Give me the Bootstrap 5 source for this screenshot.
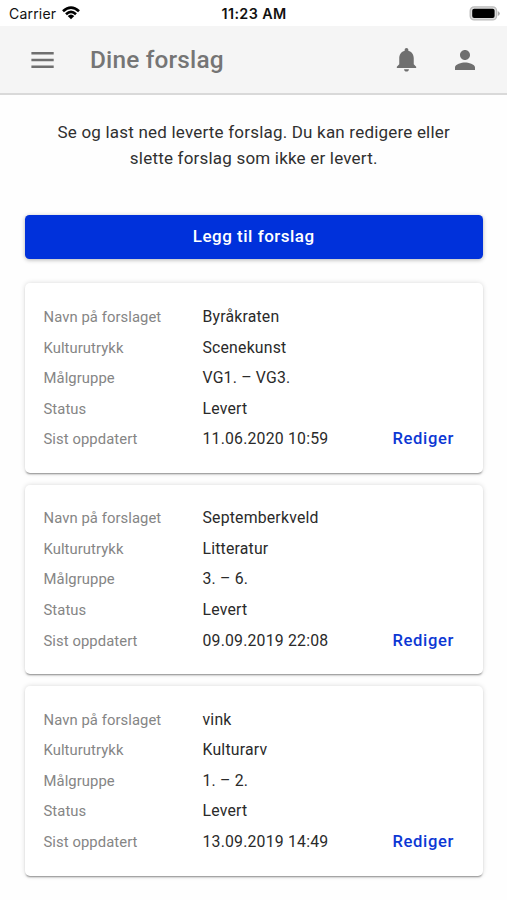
<!DOCTYPE html>
<html lang="no">
<head>
<meta charset="utf-8">
<meta name="viewport" content="width=device-width, initial-scale=1">
<title>Dine forslag</title>
<link href="https://cdn.jsdelivr.net/npm/bootstrap@5.3.0/dist/css/bootstrap.min.css" rel="stylesheet">
<style>
body{font-family:Roboto,"Liberation Sans",sans-serif;color:#303030;background:#fefefe;min-height:900px;overflow:hidden}
.status-bar{height:26px;padding:1px 7px 0 9px;font-family:Inter,"Liberation Sans",sans-serif;font-size:14px;color:#111;line-height:26px;background:#fff}
.status-bar .clock{font-weight:600;font-size:14.3px;letter-spacing:.4px;white-space:nowrap;margin-right:1px}
.carrier{letter-spacing:.2px}
.wifi{margin:-1px 0 0 5px}
.app-bar{height:69px;background:#f5f5f5;border-bottom:2px solid #d9d9d9;color:#6f6f6f;padding:0 27px 0 29px}
.app-title{font-size:24.4px;font-weight:500;letter-spacing:.18px;color:#757575;margin:0 0 0 33px;line-height:28px}
.profile-icon{margin-left:29px}
.page{padding:24px 24.5px 0 25px}
.intro{font-size:17px;line-height:26px;letter-spacing:.2px;margin:0 0 43.7px}
.btn-add{height:44px;padding:0;border:0;border-radius:4.5px;background:#0031db;color:#fff;font-size:17px;font-weight:500;letter-spacing:.5px;box-shadow:0 1px 4px rgba(0,0,0,.3);margin-bottom:24.5px}
.proposal{border:0;border-radius:5px;background:#fff;padding:18.8px 19px 18px 18.5px;margin-bottom:12.1px;box-shadow:0 2px 2px -1px rgba(0,0,0,.42),0 0 5px rgba(0,0,0,.15)}
.proposal .line{height:30.53px;line-height:30.53px;white-space:nowrap}
.proposal dt{width:159px;font-size:14.8px;font-weight:400;letter-spacing:.08px;color:#858585}
.proposal dd{margin:0;font-size:15.8px;letter-spacing:.2px;color:#2a2a2a}
.edit{color:#0c37d4;font-size:16.6px;font-weight:500;letter-spacing:.65px;text-decoration:none;margin-right:9.5px}
</style>
<script src="https://cdn.jsdelivr.net/npm/bootstrap@5.3.0/dist/js/bootstrap.bundle.min.js"></script>
</head>
<body>
<div class="status-bar d-flex align-items-center">
  <div class="col d-flex align-items-center"><span class="carrier">Carrier</span>
    <svg class="wifi" width="20" height="16" viewBox="0 0 20 16" fill="none" stroke="#000" stroke-width="2.7"><path d="M2 6.2Q10 -1 18 6.2M5 9.2Q10 4.7 15 9.2"/><path d="M6.7 11Q10 8 13.3 11L10 14.3Z" fill="#000" stroke="none"/></svg>
  </div>
  <span class="clock">11:23 AM</span>
  <div class="col d-flex justify-content-end">
    <svg width="31" height="15" viewBox="0 0 31 15"><rect x="1.2" y=".9" width="26.4" height="13" rx="4" fill="#ddd" stroke="#bbb" stroke-width="1.3"/><rect x="3.2" y="2.800" width="22.4" height="9.3" rx="2" fill="#000"/><path d="M28.800 5v5q2-1 2-2.500T28.800 5" fill="#aaa"/></svg>
  </div>
</div>
<header class="app-bar d-flex align-items-center">
  <svg width="28" height="28" viewBox="0 0 28 28" fill="none" stroke="currentColor" stroke-width="2.4"><path d="M2.400 7.300H24.700M2.400 14H24.700M2.400 20.700H24.700"/></svg>
  <h1 class="app-title">Dine forslag</h1>
  <svg class="ms-auto" width="29" height="29" viewBox="0 0 24 24" fill="currentColor"><path d="M12 22c1.100 0 2-.9 2-2h-4c0 1.100.89 2 2 2zm6-6v-5c0-3.070-1.640-5.640-4.500-6.320V4c0-.83-.67-1.500-1.500-1.500s-1.500.67-1.500 1.500v.68C7.630 5.360 6 7.920 6 11v5l-2 2v1h16v-1l-2-2z"/></svg>
  <svg class="profile-icon" width="30" height="30" viewBox="0 0 24 24" fill="currentColor"><path d="M12 12c2.210 0 4-1.790 4-4s-1.790-4-4-4-4 1.790-4 4 1.790 4 4 4zm0 2c-2.670 0-8 1.340-8 4v2h16v-2c0-2.660-5.330-4-8-4z"/></svg>
</header>
<main class="page">
  <p class="intro text-center">Se og last ned leverte forslag. Du kan redigere eller<br>slette forslag som ikke er levert.</p>
  <button type="button" class="btn btn-primary btn-add w-100">Legg til forslag</button>
  <dl class="card proposal">
    <div class="line d-flex"><dt>Navn på forslaget</dt><dd>Byråkraten</dd></div>
    <div class="line d-flex"><dt>Kulturutrykk</dt><dd>Scenekunst</dd></div>
    <div class="line d-flex"><dt>Målgruppe</dt><dd>VG1. – VG3.</dd></div>
    <div class="line d-flex"><dt>Status</dt><dd>Levert</dd></div>
    <div class="line d-flex"><dt>Sist oppdatert</dt><dd>11.06.2020 10:59</dd><dd class="ms-auto"><a class="edit" href="#">Rediger</a></dd></div>
  </dl>
  <dl class="card proposal">
    <div class="line d-flex"><dt>Navn på forslaget</dt><dd>Septemberkveld</dd></div>
    <div class="line d-flex"><dt>Kulturutrykk</dt><dd>Litteratur</dd></div>
    <div class="line d-flex"><dt>Målgruppe</dt><dd>3. – 6.</dd></div>
    <div class="line d-flex"><dt>Status</dt><dd>Levert</dd></div>
    <div class="line d-flex"><dt>Sist oppdatert</dt><dd>09.09.2019 22:08</dd><dd class="ms-auto"><a class="edit" href="#">Rediger</a></dd></div>
  </dl>
  <dl class="card proposal">
    <div class="line d-flex"><dt>Navn på forslaget</dt><dd>vink</dd></div>
    <div class="line d-flex"><dt>Kulturutrykk</dt><dd>Kulturarv</dd></div>
    <div class="line d-flex"><dt>Målgruppe</dt><dd>1. – 2.</dd></div>
    <div class="line d-flex"><dt>Status</dt><dd>Levert</dd></div>
    <div class="line d-flex"><dt>Sist oppdatert</dt><dd>13.09.2019 14:49</dd><dd class="ms-auto"><a class="edit" href="#">Rediger</a></dd></div>
  </dl>
</main>
</body>
</html>
